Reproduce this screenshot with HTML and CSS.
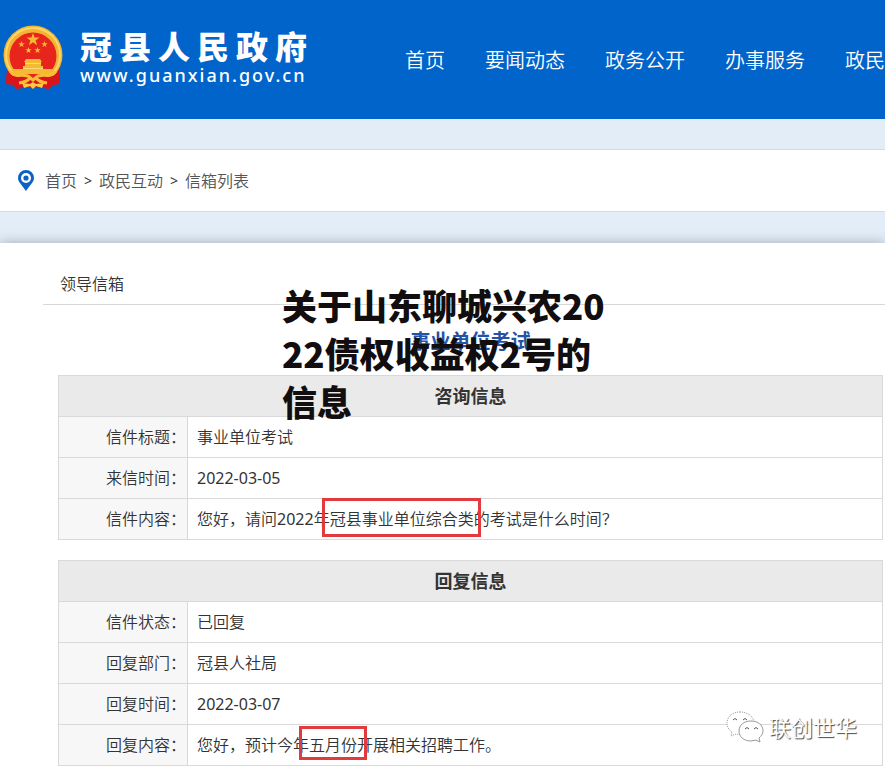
FILE: index.html
```html
<!DOCTYPE html>
<html lang="zh-CN">
<head>
<meta charset="utf-8">
<title>冠县人民政府</title>
<link rel="stylesheet" href="styles.css">
</head>
<body>
<header class="top">
  <a class="brand" href="#">
    <svg class="emblem" viewBox="0 0 62 66" aria-hidden="true">
      <path d="M5 44l-1 14 7 1 4 5 9-2h14l9 2 4-5 7-1-1-14z" fill="#d3151b"/>
      <circle cx="31" cy="30" r="29.500" fill="#f3b433"/>
      <circle cx="31" cy="30" r="27" fill="none" stroke="#ffd565" stroke-width="2"/>
      <circle cx="31" cy="31" r="23.500" fill="#e8251c"/>
      <g fill="#f5b932">
        <path id="s" d="M31 8l1.600 4.600h4.900l-3.900 2.900 1.500 4.700-4.100-2.900-4.100 2.900 1.500-4.700-3.900-2.900h4.900z"/>
        <use href="#s" transform="translate(4 12) scale(.5)"/>
        <use href="#s" transform="translate(27 12) scale(.5)"/>
        <use href="#s" transform="translate(11 18) scale(.5)"/>
        <use href="#s" transform="translate(20 18) scale(.5)"/>
        <path d="M24 34h14l2 3h-1v4h2v3h10l-3 5H14l-3-5h10v-3h2v-4h-1z"/>
      </g>
      <path d="M23 38.500h16M21 43.500h20" stroke="#fbd980" stroke-width="1"/>
      <path d="M5 47q6 6 11 3l9 0 6 3 6-3h9q5 3 11-3l1 12-7 1-4 4-9-2h-14l-9 2-4-4-7-1z" fill="#d9151b"/>
      <path d="M8 46q5 6 11 4l7 1 5 4 5-4 7-1q6 2 11-4M17 58q8-1 11-5M45 58q-8-1-11-5" fill="none" stroke="#f9bd35" stroke-width="3"/>
      <path d="M20 58l8 1 3-2 3 2 8-1-2 5-6-2-3 3-3-3-6 2z" fill="#ffc843"/>
    </svg>
    <span class="brand-text">
      <span class="brand-name">冠县人民政府</span>
      <span class="brand-url">www.guanxian.gov.cn</span>
    </span>
  </a>
  <nav class="nav">
    <a href="#">首页</a><a href="#">要闻动态</a><a href="#">政务公开</a><a href="#">办事服务</a><a href="#">政民互动</a>
  </nav>
</header>

<nav class="crumbs" aria-label="当前位置">
  <svg class="pin" viewBox="0 0 16 21" aria-hidden="true">
    <path d="M8 0a8 8 0 0 0-8 8c0 4 4 7 8 13 4-6 8-9 8-13a8 8 0 0 0-8-8z" fill="#0b62c4"/>
    <circle cx="8" cy="8" r="5" fill="#fff"/><circle cx="8" cy="8" r="2.600" fill="#0b62c4"/>
  </svg>
  <a href="#">首页</a><span>&gt;</span><a href="#">政民互动</a><span>&gt;</span><a href="#">信箱列表</a>
</nav>

<main class="panel">
  <h2 class="section">领导信箱</h2>
  <h1 class="subject">事业单位考试</h1>
  <table class="info">
    <thead><tr><th colspan="2">咨询信息</th></tr></thead>
    <tbody>
      <tr><th scope="row">信件标题：</th><td>事业单位考试</td></tr>
      <tr><th scope="row">来信时间：</th><td><time>2022-03-05</time></td></tr>
      <tr><th scope="row">信件内容：</th><td>您好，请问<time>2022</time>年<span class="ring">冠县事业单位综合类</span>的考试是什么时间？</td></tr>
    </tbody>
  </table>
  <table class="info">
    <thead><tr><th colspan="2">回复信息</th></tr></thead>
    <tbody>
      <tr><th scope="row">信件状态：</th><td>已回复</td></tr>
      <tr><th scope="row">回复部门：</th><td>冠县人社局</td></tr>
      <tr><th scope="row">回复时间：</th><td><time>2022-03-07</time></td></tr>
      <tr><th scope="row">回复内容：</th><td>您好，预计今年<span class="ring ring-small">五月份</span>开展相关招聘工作。</td></tr>
    </tbody>
  </table>
  <p class="headline">关于山东聊城兴农2022债权收益权2号的信息</p>
  <div class="watermark">
    <svg viewBox="0 0 38 32" aria-hidden="true">
      <g fill="#fff" stroke="#999" stroke-width="1">
        <path stroke-dasharray="1 1" d="M14 1C6 1 1 6 1 12c0 4 2 7 5 9l-1 4 5-2c8 2 18-2 18-11C28 6 22 1 14 1z"/>
        <path d="M25 10c-7 0-12 4-12 10s5 10 12 10l5-1 4 2-1-4c2-2 4-4 4-7 0-6-5-10-12-10z"/>
      </g>
      <path d="M7 9q2-3 4 0M17 9q2-3 4 0M19 18q2-3 4 0M28 18q2-3 4 0" fill="none" stroke="#555" stroke-width="1"/>
    </svg>
    <span>联创世华</span>
  </div>
</main>
</body>
</html>
```
FILE: styles.css
```css
* { box-sizing: border-box; }
body {
  margin: 0;
  background: #e2edf8;
  color: #333;
  font: 16px/24px "Noto Sans", "Noto Sans CJK SC", sans-serif;
  font-weight: 350;
  overflow-x: hidden;
}
a { color: inherit; text-decoration: none; }
time { font-weight: 400; }

.top {
  display: flex;
  height: 119px;
  background: #0064cb;
  color: #fff;
  overflow: hidden;
}
.brand { display: flex; flex: none; gap: 16px; width: 405px; padding: 25px 0 0 2px; }
.emblem { width: 62px; height: 66px; }
.brand-text { display: flex; flex-direction: column; }
.brand-name {
  font: 900 32px/40px "Noto Sans CJK SC", sans-serif;
  letter-spacing: 7px;
}
.brand-url { font: 500 18px/20px "Noto Sans", sans-serif; letter-spacing: 2px; }
.nav { display: flex; gap: 40px; padding-top: 45px; font-size: 20px; line-height: 32px; white-space: nowrap; }

.crumbs {
  display: flex;
  align-items: center;
  gap: 7px;
  height: 63px;
  margin-top: 30px;
  padding-left: 18px;
  background: #fff;
  border: solid #d0dce8;
  border-width: 1px 0;
  color: #555;
}
.crumbs span { font-size: 14px; color: #333; font-weight: 400; }
.pin { width: 16px; height: 21px; margin-right: 4px; }

.panel {
  position: relative;
  margin-top: 31px;
  padding: 24px 2px 2px 58px;
  background: #fff;
  box-shadow: 0 0 12px #9eabb8;
}
.section {
  margin: 0 -2px 0 -15px;
  padding: 5px 17px 8px;
  border-bottom: 1px solid #d8d8d8;
  font-size: 16px;
  font-weight: 350;
}
.subject { margin: 22px 0 18px; color: #2453a6; font-size: 20px; line-height: 30px; text-align: center; }

.info { width: 100%; border-collapse: collapse; margin-bottom: 20px; }
.info:last-of-type { margin-bottom: 0; }
.info th, .info td { height: 41px; border: 1px solid #d9d9d9; padding: 0 9px; }
.info thead th { background: #eaeaea; font-size: 18px; font-weight: 700; }
.info tbody th { width: 129px; padding-right: 1px; background: #f7f7f7; text-align: right; font-weight: 350; }

.ring { position: relative; }
.ring::after { content: ""; position: absolute; inset: -10px -7px -7px -8px; border: 3px solid #e33b3d; }
.ring-small::after { inset: -8px -10px -4px; }

.headline {
  position: absolute;
  top: 38px;
  left: 282px;
  width: 330px;
  margin: 0;
  color: #120e10;
  font: 900 35px/48px "Noto Sans CJK SC", sans-serif;
  word-break: break-all;
}
.watermark {
  position: absolute;
  right: 28px;
  bottom: 25px;
  display: flex;
  align-items: center;
  gap: 5px;
  color: #fff;
  font-size: 22px;
  line-height: 32px;
  text-shadow: 1px 1px 1px #444;
}
.watermark svg { width: 38px; height: 32px; }
```
